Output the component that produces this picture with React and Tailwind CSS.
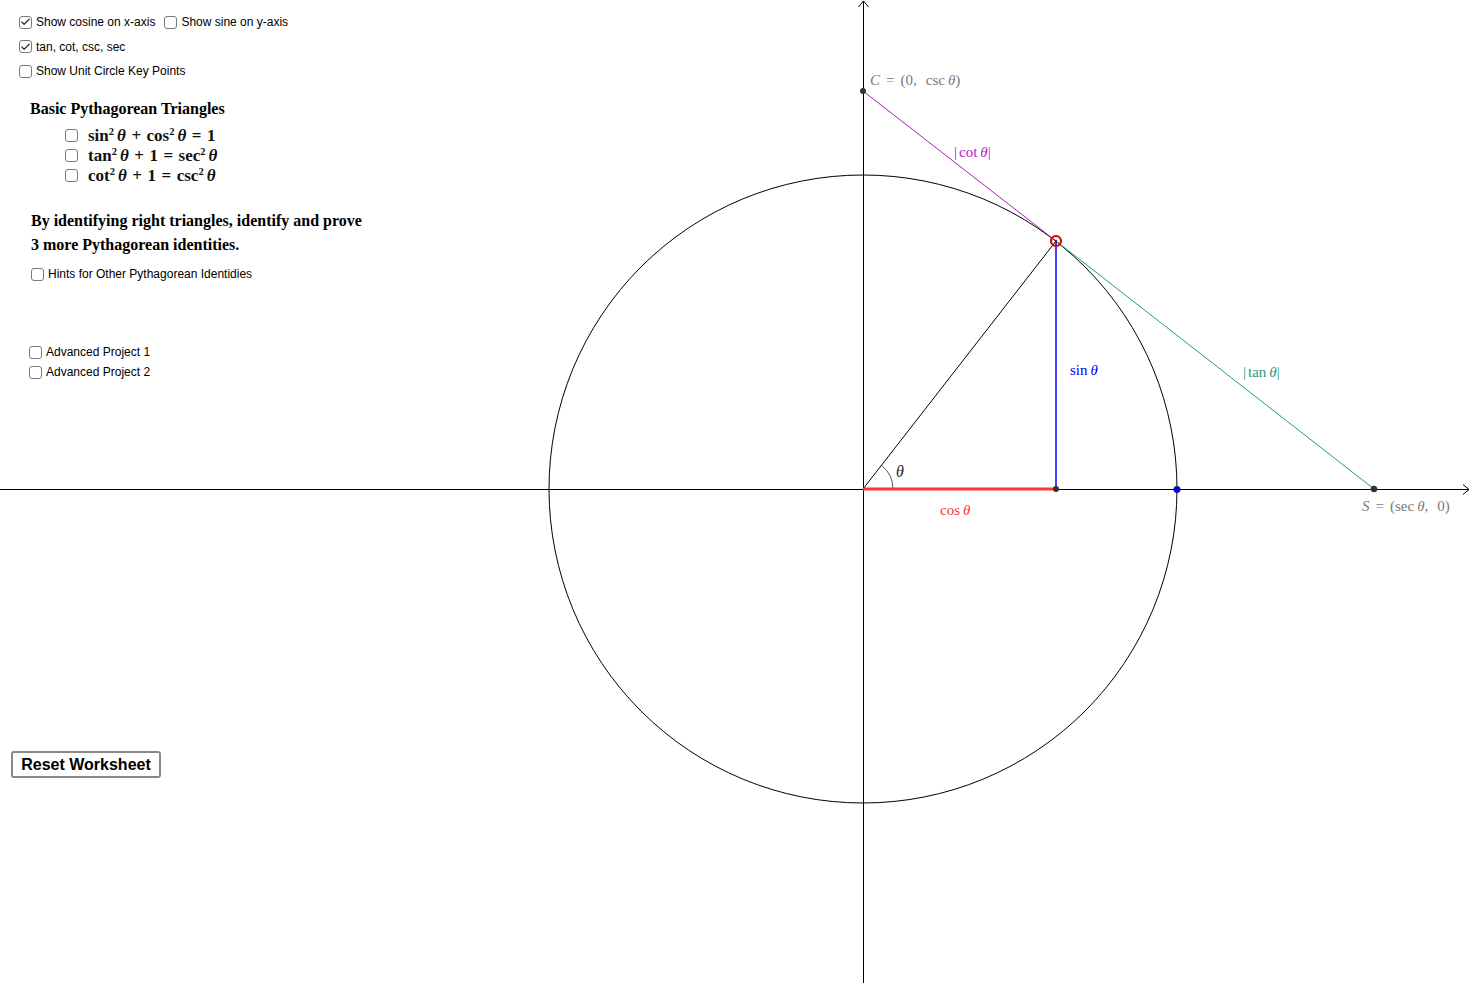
import { Check } from 'lucide-react'

const sans = { fontFamily: '"Liberation Sans", Arial, sans-serif' }

function Box({ checked }) {
  return (
    <span className="flex h-[13px] w-[13px] shrink-0 items-center justify-center rounded-[3px] border border-[#7a7a7a] bg-white">
      {checked && <Check size={12} strokeWidth={2.8} className="text-[#333]" />}
    </span>
  )
}

function Option({ checked, label, className = '' }) {
  return (
    <label className={`flex items-center gap-[4px] text-[12px] text-black ${className}`}>
      <Box checked={checked} />
      <span>{label}</span>
    </label>
  )
}

const th = <i className="ml-[3px] font-bold">θ</i>
const sq = <sup className="text-[10.5px]">2</sup>
const op = (c) => <span className="mx-[5.5px]">{c}</span>

const identities = [
  <>sin{sq}{th}{op('+')}cos{sq}{th}{op('=')}1</>,
  <>tan{sq}{th}{op('+')}1{op('=')}sec{sq}{th}</>,
  <>cot{sq}{th}{op('+')}1{op('=')}csc{sq}{th}</>,
]

// unit circle geometry (pixels)
const O = { x: 863, y: 489 }
const R = 314
const P = { x: 1056, y: 241 }
const Cpt = { x: 863, y: 91 }
const S = { x: 1374, y: 489 }

function Graph() {
  return (
    <svg className="absolute inset-0" width="1472" height="983" viewBox="0 0 1472 983">
      {/* axes */}
      <line x1="0" y1="489.5" x2="1469" y2="489.5" stroke="#000" strokeWidth="1" />
      <polyline points="1463,484.5 1469,489.5 1463,494.5" fill="none" stroke="#000" strokeWidth="1" />
      <line x1="863.5" y1="983" x2="863.5" y2="1" stroke="#000" strokeWidth="1" />
      <polyline points="858.5,7 863.5,1 868.5,7" fill="none" stroke="#000" strokeWidth="1" />

      <circle cx={O.x} cy={O.y} r={R} fill="none" stroke="#000" strokeWidth="1" />

      {/* angle */}
      <path d="M 893 489 A 30 30 0 0 0 881.5 465.4" fill="none" stroke="#555" strokeWidth="1" />

      <line x1={O.x} y1={O.y} x2={P.x} y2={P.y} stroke="#000" strokeWidth="1" />
      <line x1={Cpt.x} y1={Cpt.y} x2={P.x} y2={P.y} stroke="#b01cb8" strokeWidth="1" />
      <line x1={P.x} y1={P.y} x2={S.x} y2={S.y} stroke="#1f9e78" strokeWidth="1" />
      <line x1={P.x} y1={P.y} x2={P.x} y2={O.y} stroke="#0000ff" strokeWidth="1.5" />
      <line x1={O.x} y1={O.y} x2={P.x} y2={O.y} stroke="#ff3333" strokeWidth="3" />

      <circle cx={Cpt.x} cy={Cpt.y} r="3" fill="#333" />
      <circle cx={P.x} cy={O.y} r="3" fill="#333" />
      <circle cx={S.x} cy={S.y} r="3.2" fill="#333" />
      <circle cx="1177" cy="489.5" r="3.3" fill="#0000ff" stroke="#222" strokeWidth="0.5" />
      <circle cx={P.x} cy={P.y} r="5" fill="none" stroke="#e00000" strokeWidth="2.2" />
      <circle cx={P.x} cy={P.y} r="1.2" fill="#333" />

      <g style={{ fontFamily: '"Liberation Serif", "Times New Roman", serif' }} fontSize="15">
        <text x="870" y="85" fill="#7a7a7a">
          <tspan fontStyle="italic">C</tspan>
          <tspan dx="6">=</tspan>
          <tspan dx="6">(0,</tspan>
          <tspan dx="9">csc</tspan>
          <tspan dx="3" fontStyle="italic">θ</tspan>
          <tspan>)</tspan>
        </text>
        <text x="954" y="157" fill="#b01cb8">
          <tspan>|</tspan>
          <tspan dx="2">cot</tspan>
          <tspan dx="3" fontStyle="italic">θ</tspan>
          <tspan>|</tspan>
        </text>
        <text x="1070" y="375" fill="#0000ff">
          <tspan>sin</tspan>
          <tspan dx="3" fontStyle="italic">θ</tspan>
        </text>
        <text x="1243" y="377" fill="#1f9e78">
          <tspan>|</tspan>
          <tspan dx="2">tan</tspan>
          <tspan dx="3" fontStyle="italic">θ</tspan>
          <tspan>|</tspan>
        </text>
        <text x="940" y="515" fill="#ff3333">
          <tspan>cos</tspan>
          <tspan dx="3" fontStyle="italic">θ</tspan>
        </text>
        <text x="896" y="477" fill="#222" fontSize="16" fontStyle="italic">θ</text>
        <text x="1362" y="511" fill="#7a7a7a">
          <tspan fontStyle="italic">S</tspan>
          <tspan dx="6">=</tspan>
          <tspan dx="6">(sec</tspan>
          <tspan dx="3" fontStyle="italic">θ</tspan>
          <tspan>,</tspan>
          <tspan dx="9">0)</tspan>
        </text>
      </g>
    </svg>
  )
}

export default function App() {
  return (
    <div className="relative h-[983px] w-[1472px] overflow-hidden bg-white">
      <Graph />

      <div className="absolute left-0 top-0 flex flex-col pt-[10px]" style={sans}>
        <div className="ml-[19px] flex h-[24.5px] items-center gap-[9px]">
          <Option checked label="Show cosine on x-axis" />
          <Option label="Show sine on y-axis" />
        </div>
        <div className="ml-[19px] flex h-[24.5px] items-center">
          <Option checked label="tan, cot, csc, sec" />
        </div>
        <div className="ml-[19px] flex h-[24.5px] items-center">
          <Option label="Show Unit Circle Key Points" />
        </div>

        <div className="font-['Liberation_Serif',serif]">
          <h2 className="ml-[30px] mt-[15.5px] text-[16px] font-bold leading-[20px] text-black">
            Basic Pythagorean Triangles
          </h2>
          <div className="ml-[65px] mt-[6px] flex flex-col">
            {identities.map((expr, i) => (
              <div key={i} className="flex h-[20px] items-center gap-[10px]">
                <Box />
                <span className="text-[17px] font-bold leading-none text-[#111]">{expr}</span>
              </div>
            ))}
          </div>

          <p className="ml-[31px] mt-[24px] text-[16px] font-bold leading-[24px] text-black">
            By identifying right triangles, identify and prove
            <br />
            3 more Pythagorean identities.
          </p>
        </div>

        <div className="ml-[31px] mt-[5px] flex h-[24px] items-center">
          <Option label="Hints for Other Pythagorean Identidies" />
        </div>

        <div className="ml-[29px] mt-[56px] flex flex-col">
          <div className="flex h-[20px] items-center">
            <Option label="Advanced Project 1" />
          </div>
          <div className="flex h-[20px] items-center">
            <Option label="Advanced Project 2" />
          </div>
        </div>

        <button
          type="button"
          className="ml-[11px] mt-[369px] h-[27px] w-[150px] rounded-[3px] border-2 border-[#888] bg-white text-[16px] font-bold text-black"
        >
          Reset Worksheet
        </button>
      </div>
    </div>
  )
}
